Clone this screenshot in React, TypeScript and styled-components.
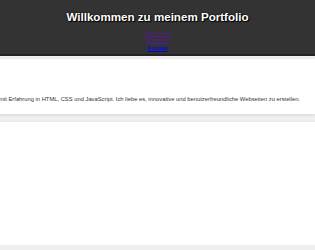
import React from "react";
import styled, { createGlobalStyle } from "styled-components";

const Global = createGlobalStyle`
  html, body { margin: 0; padding: 0; }
  body {
    background: #efefef;
    font-family: "Liberation Sans", Arial, sans-serif;
    overflow: hidden;
  }
`;

const Header = styled.header`
  background: #333333;
  height: 56px;
  border-bottom: 2px solid #232323;
  display: flex;
  flex-direction: column;
  align-items: center;
  box-sizing: border-box;
  padding-top: 10px;
`;

const Title = styled.h1`
  margin: 0;
  color: #ffffff;
  font-size: 11.6px;
  line-height: 14px;
  font-weight: bold;
  text-shadow: 0 0 2px #000, 1px 1px 1px #000;
`;

const Nav = styled.nav`
  display: flex;
  flex-direction: column;
  align-items: center;
  margin-top: 6px;
`;

const NavLink = styled.a<{ $visited?: boolean }>`
  font-size: 6px;
  line-height: 7.3px;
  color: ${(p) => (p.$visited ? "#551a8b" : "#0000ee")};
  text-decoration: underline;
`;

const Main = styled.main`
  display: flex;
  flex-direction: column;
  gap: 8px;
  padding-top: 3px;
`;

const Section = styled.section<{ $height: number }>`
  background: #ffffff;
  height: ${(p) => p.$height}px;
  box-shadow: 0 1px 3px rgba(0, 0, 0, 0.12);
  display: flex;
  flex-direction: column;
  overflow: hidden;
`;

const Text = styled.p`
  margin: 36px 15px 0 0;
  display: flex;
  justify-content: flex-end;
  white-space: nowrap;
  font-size: 5.8px;
  line-height: 8px;
  color: #333333;
`;

export default function App() {
  return (
    <>
      <Global />
      <Header>
        <Title>Willkommen zu meinem Portfolio</Title>
        <Nav>
          <NavLink href="#about" $visited>Über mich</NavLink>
          <NavLink href="#projects" $visited>Projekte</NavLink>
          <NavLink href="#contact">Kontakt</NavLink>
        </Nav>
      </Header>
      <Main>
        <Section $height={55}>
          <Text>
            <span>
              Ich bin ein Webentwickler mit Erfahrung in HTML, CSS und JavaScript. Ich liebe es, innovative und benutzerfreundliche Webseiten zu erstellen.
            </span>
          </Text>
        </Section>
        <Section $height={123} />
      </Main>
    </>
  );
}
